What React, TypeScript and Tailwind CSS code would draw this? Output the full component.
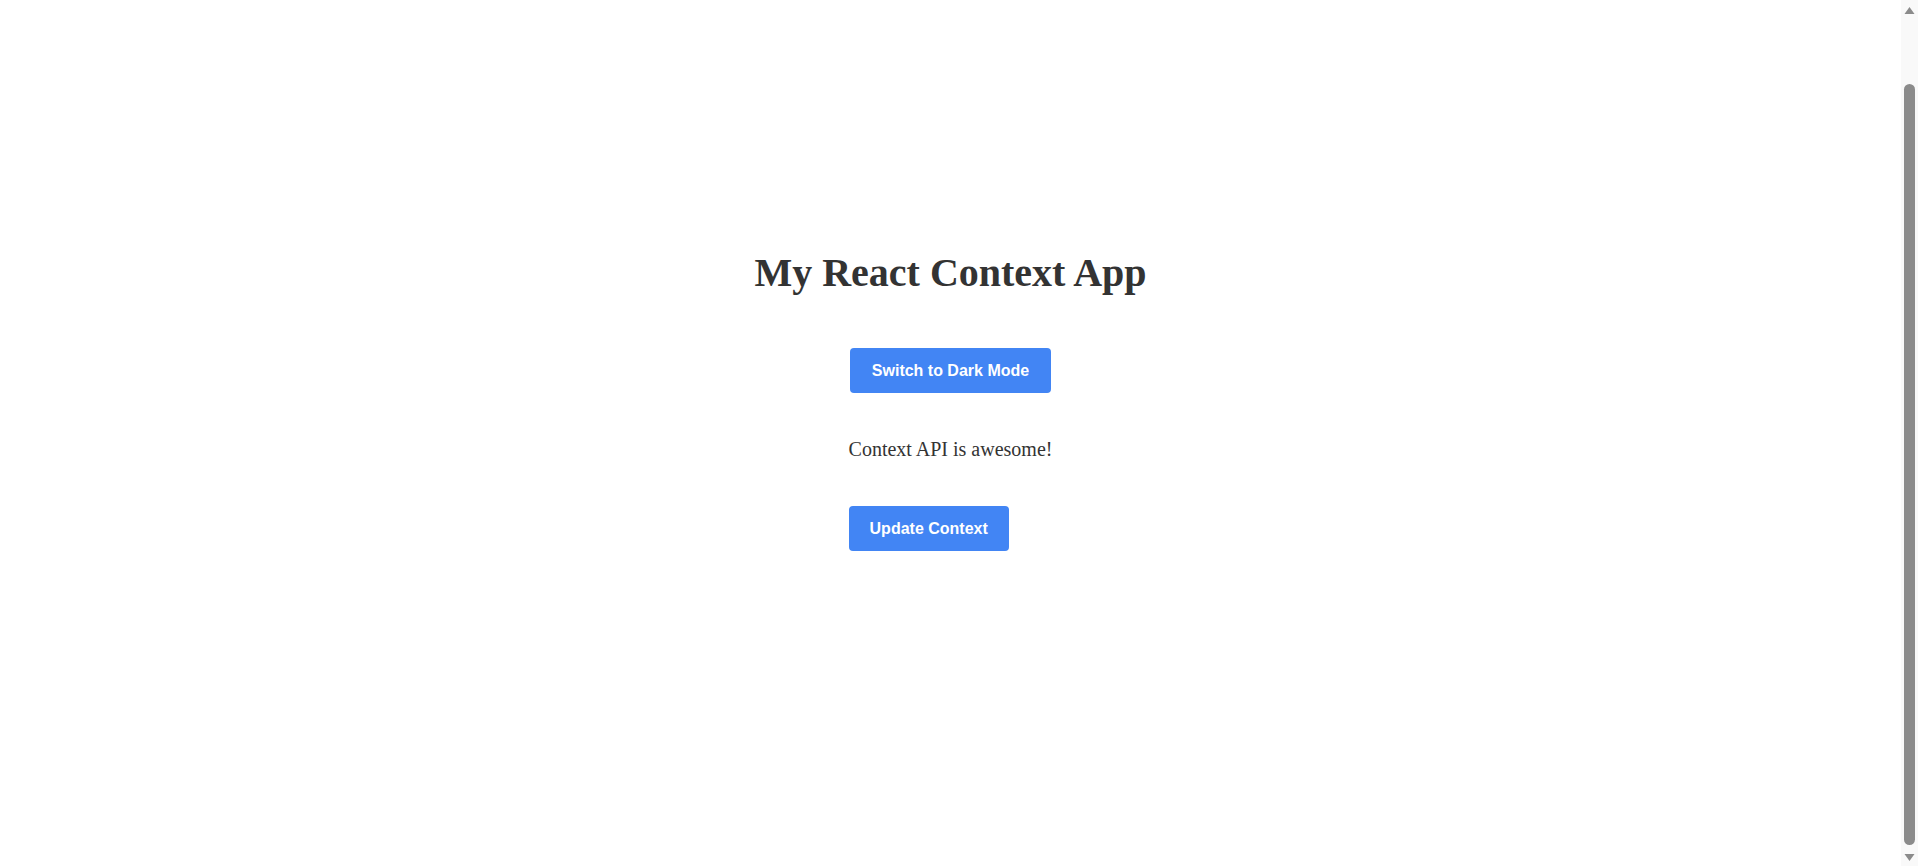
export default function App() {
  return (
    <div className="min-h-[946px] bg-white pr-[17px] text-[#333333] font-['Liberation_Serif','Times_New_Roman',serif]">
      <div className="flex flex-col items-center pt-[249px]">
        {/* Header */}
        <h1 className="text-[40px] leading-[48px] font-bold">My React Context App</h1>

        <button className="mt-[51px] h-[45px] px-[22px] rounded-[4px] bg-[#4285f4] text-white text-[16px] font-bold font-['Liberation_Sans',Arial,sans-serif]">
          Switch to Dark Mode
        </button>

        {/* Context consumer */}
        <div className="mt-[42px] flex flex-col items-start">
          <p className="text-[20px] leading-[28px]">Context API is awesome!</p>
          <button className="mt-[43px] h-[45px] px-[21px] rounded-[4px] bg-[#4285f4] text-white text-[16px] font-bold font-['Liberation_Sans',Arial,sans-serif]">
            Update Context
          </button>
        </div>
      </div>

      {/* window scrollbar */}
      <div className="fixed top-0 right-0 bottom-0 w-[17px] bg-[#f9f9f9] flex flex-col items-center">
        <svg width="17" height="17" viewBox="0 0 17 17" className="shrink-0">
          <path d="M3.5 14 L13.5 14 L8.5 7 Z" fill="#8b8b8b" />
        </svg>
        <div className="flex-1 w-full flex flex-col px-[3px] pt-[67px] pb-[4px]">
          <div className="flex-1 rounded-full bg-[#8b8b8b]" />
        </div>
        <svg width="17" height="17" viewBox="0 0 17 17" className="shrink-0">
          <path d="M3.5 5 L13.5 5 L8.5 12 Z" fill="#8b8b8b" />
        </svg>
      </div>
    </div>
  );
}
